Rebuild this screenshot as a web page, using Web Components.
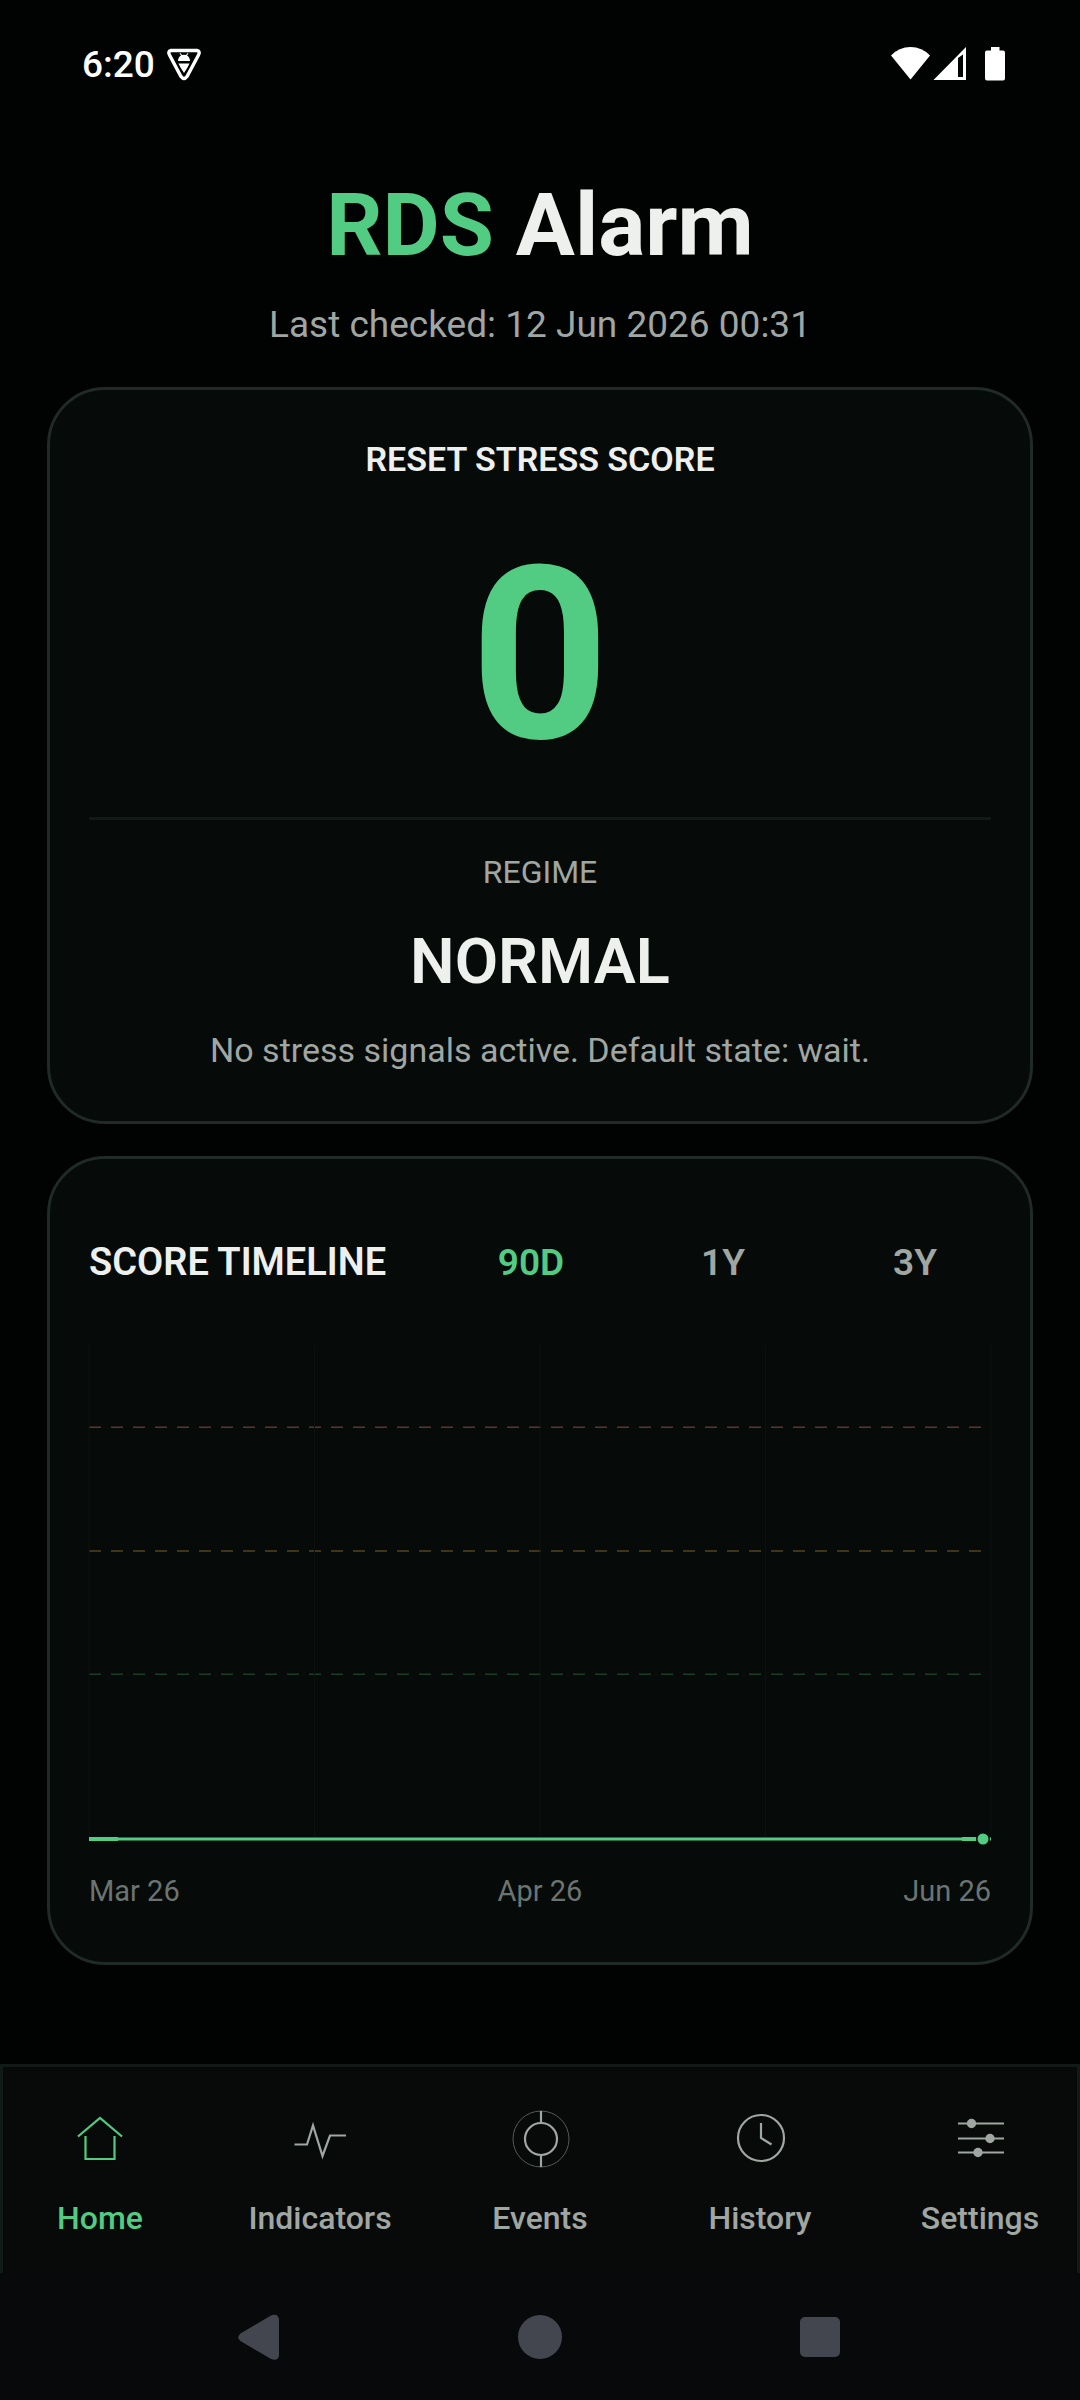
<!DOCTYPE html>
<html lang="en">
<head>
<meta charset="utf-8">
<meta name="viewport" content="width=device-width, initial-scale=1">
<title>RDS Alarm</title>
<style>
    :root {
        --green: #52cc82;
        --text: #eef0ee;
        --muted: #a0a6a2;
        --faint: #6c7471;
        --panel: #060a09;
        --line: #202a27;
        --line-soft: #121a18;
    }
    html {
        background: #010202;
    }
    body {
        margin: 0;
        font-family: Roboto, "Noto Sans", sans-serif;
        color: var(--text);
    }
</style>
</head>
<body>
<rds-app></rds-app>

<script>
class StatusBar extends HTMLElement {
    constructor() {
        super();
        this.attachShadow({ mode: 'open' }).innerHTML = `
            <style>
            :host {
                display: flex;
                align-items: center;
                justify-content: space-between;
                box-sizing: border-box;
                height: 128px;
                padding: 0 74px 0 82px;
                color: #fff;
                font-size: 37px;
                font-weight: 500;
            }
            .left, .right {
                display: flex;
                align-items: center;
            }
            .left {
                gap: 11px;
            }
            svg {
                display: block;
            }
            </style>
            <div class="left">
                <span>6:20</span>
                <svg width="36" height="34" viewBox="0 0 36 34" aria-hidden="true">
                    <path d="M5 3.500H31Q34.500 4.500 32.500 8L21 29.500Q18 33.500 15 29.500L3.500 8Q1.500 4.500 5 3.500Z" fill="none" stroke="#fff" stroke-width="3.400"/>
                    <path d="M12 14Q12 10 15 8.500L13.500 6.500L14.300 6L16 8Q18 7.500 20 8L21.700 6L22.500 6.500L21 8.500Q24 10 24 14Z" fill="#fff"/>
                    <path d="M12.500 16.500H23.500L21.500 20.500L18 26L14.500 20.500Z" fill="#fff"/>
                </svg>
            </div>
            <svg class="right" width="116" height="36" viewBox="0 0 116 36" fill="#fff" aria-hidden="true">
                <path d="M1 9.500Q9 1 20.500 1T40 9.500L20.500 33.500Z"/>
                <path fill-rule="evenodd" d="M43.500 34L76 1V34ZM68 12V31H73V8.500Z"/>
                <path d="M101 1H109.500V4.500H113Q115 4.500 115 6.500V32.500Q115 34.500 113 34.500H97Q95 34.500 95 32.500V6.500Q95 4.500 97 4.500H101Z"/>
            </svg>
        `;
    }
}
customElements.define('status-bar', StatusBar);

class AppHeader extends HTMLElement {
    constructor() {
        super();
        this.attachShadow({ mode: 'open' }).innerHTML = `
            <style>
            :host {
                display: block;
                padding: 45px 0 38px;
                text-align: center;
            }
            h1 {
                margin: 0 0 24px;
                font-size: 88px;
                line-height: 104px;
                font-weight: 700;
            }
            .brand {
                color: var(--green);
            }
            p {
                margin: 0;
                font-size: 37px;
                line-height: 48px;
                color: var(--muted);
            }
            </style>
            <h1><span class="brand">RDS</span> <slot name="title"></slot></h1>
            <p><slot name="checked"></slot></p>
        `;
    }
}
customElements.define('app-header', AppHeader);

class PanelCard extends HTMLElement {
    constructor() {
        super();
        this.attachShadow({ mode: 'open' }).innerHTML = `
            <style>
            :host {
                display: block;
                padding: 39px;
                border: 3px solid var(--line);
                border-radius: 58px;
                background: var(--panel);
            }
            </style>
            <slot></slot>
        `;
    }
}
customElements.define('panel-card', PanelCard);

class StressScore extends HTMLElement {
    constructor() {
        super();
        this.attachShadow({ mode: 'open' }).innerHTML = `
            <style>
            :host {
                display: block;
                padding: 8px 0 10px;
                text-align: center;
            }
            h2, p {
                margin: 0;
            }
            h2 {
                font-size: 34px;
                line-height: 44px;
                font-weight: 600;
            }
            .score {
                margin: 54px 0 42px;
                font-size: 242px;
                line-height: 240px;
                font-weight: 700;
                color: var(--green);
            }
            hr {
                margin: 0 0 32px;
                border: 0;
                border-top: 3px solid var(--line-soft);
            }
            .label {
                font-size: 32px;
                line-height: 40px;
                color: var(--muted);
            }
            .regime {
                margin: 30px 0 26px;
                font-size: 63px;
                line-height: 80px;
                font-weight: 600;
            }
            .note {
                font-size: 34px;
                line-height: 44px;
                color: var(--muted);
            }
            </style>
            <h2>RESET STRESS SCORE</h2>
            <p class="score"><slot name="score"></slot></p>
            <hr>
            <p class="label">REGIME</p>
            <p class="regime"><slot name="regime"></slot></p>
            <p class="note"><slot name="note"></slot></p>
        `;
    }
}
customElements.define('stress-score', StressScore);

class ScoreTimeline extends HTMLElement {
    constructor() {
        super();
        this.attachShadow({ mode: 'open' }).innerHTML = `
            <style>
            :host {
                display: block;
                padding-bottom: 14px;
            }
            .head {
                display: flex;
                align-items: center;
                gap: 40px;
            }
            h2 {
                flex: 1;
                margin: 0;
                font-size: 38px;
                line-height: 48px;
                font-weight: 600;
                white-space: nowrap;
            }
            button {
                width: 152px;
                height: 128px;
                padding: 0;
                border: 0;
                background: none;
                font: inherit;
                font-size: 37px;
                font-weight: 600;
                color: var(--muted);
            }
            button[aria-pressed="true"] {
                color: var(--green);
            }
            svg {
                display: block;
                width: 100%;
                height: 506px;
                margin: 19px 0 22px;
                overflow: visible;
            }
            .grid line {
                stroke: #0c1110;
            }
            .levels line {
                stroke-width: 1.5;
                stroke-dasharray: 12 10;
            }
            .dates {
                display: grid;
                grid-template-columns: 1fr 1fr 1fr;
                font-size: 29px;
                line-height: 36px;
                color: var(--faint);
            }
            .dates :nth-child(2) {
                text-align: center;
            }
            .dates :nth-child(3) {
                text-align: right;
            }
            </style>
            <div class="head">
                <h2>SCORE TIMELINE</h2>
                <button type="button" aria-pressed="true">90D</button>
                <button type="button" aria-pressed="false">1Y</button>
                <button type="button" aria-pressed="false">3Y</button>
            </div>
            <svg role="img" aria-label="Score timeline">
                <g class="levels">
                    <line x1="0" x2="100%" y1="82.250" y2="82.250" stroke="#5e3432"/>
                    <line x1="0" x2="100%" y1="206" y2="206" stroke="#54431f"/>
                    <line x1="0" x2="100%" y1="329.250" y2="329.250" stroke="#1b3c2b"/>
                </g>
                <g class="grid">
                    <line x1="0" x2="0" y1="0" y2="494"/>
                    <line x1="25%" x2="25%" y1="0" y2="494"/>
                    <line x1="50%" x2="50%" y1="0" y2="494"/>
                    <line x1="75%" x2="75%" y1="0" y2="494"/>
                    <line x1="100%" x2="100%" y1="0" y2="494"/>
                </g>
                <line x1="0" x2="100%" y1="494" y2="494" stroke="#52cc82" stroke-width="3"/>
                <rect x="0" y="492" width="29" height="4" fill="#52cc82"/>
                <svg x="100%" y="494" width="1" height="1" overflow="visible">
                    <rect x="-29" y="-2" width="14" height="4" fill="#52cc82"/>
                    <circle cx="-8" cy="0" r="7" fill="#060a09"/>
                    <circle cx="-8" cy="0" r="5.500" fill="#52cc82"/>
                </svg>
            </svg>
            <div class="dates">
                <span>Mar 26</span>
                <span>Apr 26</span>
                <span>Jun 26</span>
            </div>
        `;
    }
}
customElements.define('score-timeline', ScoreTimeline);

const ICONS = {
    home: `<path d="M8 27.500L30 9L52 27.500M15.500 27V50H44.500V27"/>`,
    indicators: `<path d="M4.500 35.500H17L23 16.500L32.500 47L40 26.500H56"/>`,
    events: `<circle cx="31" cy="30" r="28" stroke="#555957" stroke-width="1"/>
        <circle cx="31" cy="30" r="16"/><path d="M31 2V14M31 46V58"/>`,
    history: `<circle cx="31" cy="29" r="23"/><path d="M31 14V29L41.500 35.500"/>`,
    settings: `<path d="M8 14.500H54M8 29.500H54M8 43.500H54"/>
        <g fill="currentColor" stroke="none"><circle cx="21.500" cy="14.500" r="4.700"/>
        <circle cx="40" cy="29.500" r="4.700"/><circle cx="28" cy="43.500" r="4.700"/></g>`
};

class NavTab extends HTMLElement {
    constructor() {
        super();
        this.attachShadow({ mode: 'open' });
    }

    connectedCallback() {
        this.shadowRoot.innerHTML = `
            <style>
            :host {
                display: block;
                min-width: 0;
                color: var(--muted);
            }
            :host([active]) {
                color: var(--green);
            }
            a {
                display: flex;
                flex-direction: column;
                align-items: center;
                gap: 29px;
                color: inherit;
                text-decoration: none;
                font-size: 32px;
                line-height: 40px;
                font-weight: 500;
            }
            svg {
                display: block;
                fill: none;
                stroke: currentColor;
                stroke-width: 2.2;
            }
            </style>
            <a href="#${this.getAttribute('icon')}">
                <svg width="60" height="60" viewBox="0 0 60 60" aria-hidden="true">${ICONS[this.getAttribute('icon')]}</svg>
                <span><slot></slot></span>
            </a>
        `;
    }
}
customElements.define('nav-tab', NavTab);

class BottomNav extends HTMLElement {
    constructor() {
        super();
        this.attachShadow({ mode: 'open' }).innerHTML = `
            <style>
            :host {
                display: block;
                border: 3px solid var(--line-soft);
                border-bottom: 0;
                background: #070a09;
            }
            nav {
                display: grid;
                grid-template-columns: repeat(5, 1fr);
                column-gap: 26px;
                padding: 42px 0 35px;
            }
            </style>
            <nav><slot></slot></nav>
        `;
    }
}
customElements.define('bottom-nav', BottomNav);

class SystemBar extends HTMLElement {
    constructor() {
        super();
        this.attachShadow({ mode: 'open' }).innerHTML = `
            <style>
            :host {
                display: flex;
                align-items: center;
                justify-content: center;
                gap: 232px;
                height: 127px;
                background: #08090b;
            }
            button {
                display: flex;
                padding: 0;
                border: 0;
                background: none;
            }
            svg {
                display: block;
                fill: #44464f;
            }
            </style>
            <button type="button" aria-label="Back">
                <svg width="48" height="48" viewBox="0 0 48 48"><path d="M4.500 20.500L35 2.500Q42 0 43 6.500V42.500Q42 48.500 35 46L4.500 28Q0 24.250 4.500 20.500Z"/></svg>
            </button>
            <button type="button" aria-label="Home">
                <svg width="48" height="48" viewBox="0 0 48 48"><circle cx="24" cy="24" r="22"/></svg>
            </button>
            <button type="button" aria-label="Overview">
                <svg width="48" height="48" viewBox="0 0 48 48"><rect x="4" y="4" width="40" height="40" rx="5"/></svg>
            </button>
        `;
    }
}
customElements.define('system-bar', SystemBar);

class RdsApp extends HTMLElement {
    constructor() {
        super();
        this.attachShadow({ mode: 'open' }).innerHTML = `
            <style>
            :host {
                display: flex;
                flex-direction: column;
                min-height: 100vh;
            }
            main {
                display: flex;
                flex-direction: column;
                gap: 32px;
                padding: 0 47px 99px;
            }
            bottom-nav {
                margin-top: auto;
            }
            </style>
            <status-bar></status-bar>
            <app-header>
                <span slot="title">Alarm</span>
                <span slot="checked">Last checked: 12 Jun 2026 00:31</span>
            </app-header>
            <main>
                <panel-card>
                    <stress-score>
                        <span slot="score">0</span>
                        <span slot="regime">NORMAL</span>
                        <span slot="note">No stress signals active. Default state: wait.</span>
                    </stress-score>
                </panel-card>
                <panel-card>
                    <score-timeline></score-timeline>
                </panel-card>
            </main>
            <bottom-nav>
                <nav-tab icon="home" active>Home</nav-tab>
                <nav-tab icon="indicators">Indicators</nav-tab>
                <nav-tab icon="events">Events</nav-tab>
                <nav-tab icon="history">History</nav-tab>
                <nav-tab icon="settings">Settings</nav-tab>
            </bottom-nav>
            <system-bar></system-bar>
        `;
    }
}
customElements.define('rds-app', RdsApp);
</script>
</body>
</html>
